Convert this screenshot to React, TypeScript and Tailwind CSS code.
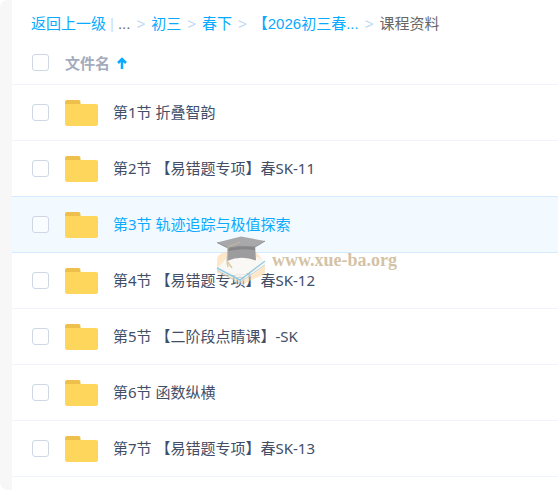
import React, { useState } from 'react';
import clsx from 'clsx';

interface Folder {
    id: number;
    name: string;
}

const folders: Folder[] = [
    { id: 1, name: '第1节 折叠智韵' },
    { id: 2, name: '第2节 【易错题专项】春SK-11' },
    { id: 3, name: '第3节 轨迹追踪与极值探索' },
    { id: 4, name: '第4节 【易错题专项】春SK-12' },
    { id: 5, name: '第5节 【二阶段点睛课】-SK' },
    { id: 6, name: '第6节 函数纵横' },
    { id: 7, name: '第7节 【易错题专项】春SK-13' },
];

const parents = ['初三', '春下', '【2026初三春...'];

const Separator: React.FC = () => (
    <span aria-hidden="true" className="mx-1.5 text-[#bcd8f5]">&gt;</span>
);

const Breadcrumb: React.FC = () => (
    <nav
        aria-label="路径"
        className={`flex h-[42px] items-center pt-1.5 pl-[19px] text-[15px] whitespace-nowrap text-[#09aaff] font-['Liberation_Sans','Noto_Sans_CJK_SC',sans-serif]`}
    >
        <a href="#up">返回上一级</a>
        <span className="mx-1 text-[#c4dbfe]">|</span>
        <span className="text-[#666666]">...</span>
        <Separator />
        {parents.map(name => (
            <React.Fragment key={name}>
                <a href="#folder">{name}</a>
                <Separator />
            </React.Fragment>
        ))}
        <span aria-current="page" className="text-[#666666]">课程资料</span>
    </nav>
);

interface CheckboxProps {
    label: string;
    checked: boolean;
    onChange: () => void;
}

const Checkbox: React.FC<CheckboxProps> = ({ label, checked, onChange }) => (
    <input
        type="checkbox"
        aria-label={label}
        checked={checked}
        onChange={onChange}
        className="block size-[17px] appearance-none rounded-[3px] border border-[#d0d7e4] bg-white/60 checked:border-[#09aaff] checked:bg-[#09aaff]"
    />
);

const FolderIcon: React.FC = () => (
    <svg width="33" height="28" viewBox="0 0 33 28" aria-hidden="true" className="shrink-0">
        <path d="M0 4a2 2 0 0 1 2-2h11.500a2 2 0 0 1 2 2v7H0z" fill="#eec04b" />
        <path d="M0 6h31a2 2 0 0 1 2 2v18a2 2 0 0 1-2 2H2a2 2 0 0 1-2-2z" fill="#ffd65c" />
    </svg>
);

// Birrete sobre un libro, semitransparente encima de la lista
const Watermark: React.FC = () => (
    <div className="pointer-events-none absolute top-[236px] left-[215px] flex items-center gap-1.5">
        <svg width="51" height="48" viewBox="0 0 51 48" aria-hidden="true">
            <path d="M2 22Q5 16 13 16L42 17L50 27V38L28 48L2 37z" fill="#fbd49a" opacity="0.55" />
            <path d="M2 34L12 22L43 22L50 26V30L27 46z" fill="#ffffff" opacity="0.6" />
            <path d="M2 34L24 47L50 29" fill="none" stroke="#a9c4d3" strokeWidth="1" opacity="0.7" />
            <path d="M2 32L25 44L50 25" fill="none" stroke="#55b8ec" strokeWidth="1.500" opacity="0.65" />
            <path d="M3 31L12 21L43 21L49 25L26 41z" fill="#f4fafd" opacity="0.55" />
            <path d="M13 9L12 25Q26 19 41 24.500L40 8z" fill="#9c9c9f" />
            <path d="M13 12Q26 9 40 11V14Q26 12 13 15z" fill="#858588" />
            <path d="M2 6.500L26 0.500L50 5L40 11Q26 9 13 12z" fill="#a8a8ab" />
            <path d="M2 6.500L13 12Q26 9 40 11L50 5" fill="none" stroke="#8f8f92" strokeWidth="1" />
            <path d="M25 6L13 11L12 25" fill="none" stroke="#c4b9a0" strokeWidth="1" />
            <path d="M12 25L17 32M12 26L13 31" fill="none" stroke="#dccda8" strokeWidth="1.500" />
        </svg>
        <span className="font-['Liberation_Serif',serif] text-[18px] leading-6 font-bold text-[#b99b6b] opacity-60">www.xue-ba.org</span>
    </div>
);

const App: React.FC = () => {
    const [selected, setSelected] = useState<number[]>([]);
    const [activeId, setActiveId] = useState(3);

    const toggle = (id: number) => {
        setSelected(prev => (prev.includes(id) ? prev.filter(item => item !== id) : [...prev, id]));
    };

    const allSelected = selected.length === folders.length;

    return (
        <div className={`min-h-screen overflow-hidden rounded-l-lg bg-[#f7f7f7] pl-3 font-['Noto_Sans','Noto_Sans_CJK_SC',sans-serif]`}>
            <main className="min-h-screen bg-white">
                <Breadcrumb />
                <table className="w-full border-collapse text-left text-[15px] leading-5">
                    <thead>
                        <tr className="h-[42px] text-[#a3abbd]">
                            <th className="w-[53px] pl-5">
                                <Checkbox
                                    label="全选"
                                    checked={allSelected}
                                    onChange={() => setSelected(allSelected ? [] : folders.map(f => f.id))}
                                />
                            </th>
                            <th className="font-bold">
                                <button type="button" className="flex items-center gap-[7px]">
                                    文件名
                                    <svg width="10" height="12" viewBox="0 0 10 12" fill="none" stroke="#09aaff" strokeWidth="2.500" aria-hidden="true">
                                        <path d="M5 12V2M1 6L5 2L9 6" />
                                    </svg>
                                </button>
                            </th>
                        </tr>
                    </thead>
                    <tbody>
                        {folders.map((folder, index) => {
                            const isActive = folder.id === activeId;
                            const afterActive = index > 0 && folders[index - 1].id === activeId;

                            return (
                                <tr
                                    key={folder.id}
                                    onMouseEnter={() => setActiveId(folder.id)}
                                    className={clsx(
                                        'h-14 border-t last:border-b last:border-b-[#f0f5fc]',
                                        isActive || afterActive ? 'border-t-[#d4eaff]' : 'border-t-[#f1f4fa]',
                                        isActive ? 'bg-[#f2faff] text-[#09aaff]' : 'text-[#424e67]'
                                    )}
                                >
                                    <td className="w-[53px] pl-5">
                                        <Checkbox
                                            label={folder.name}
                                            checked={selected.includes(folder.id)}
                                            onChange={() => toggle(folder.id)}
                                        />
                                    </td>
                                    <td>
                                        <a href="#folder" className="flex items-center gap-[15px]">
                                            <FolderIcon />
                                            {folder.name}
                                        </a>
                                    </td>
                                </tr>
                            );
                        })}
                    </tbody>
                </table>
            </main>
            <Watermark />
        </div>
    );
};

export default App;
